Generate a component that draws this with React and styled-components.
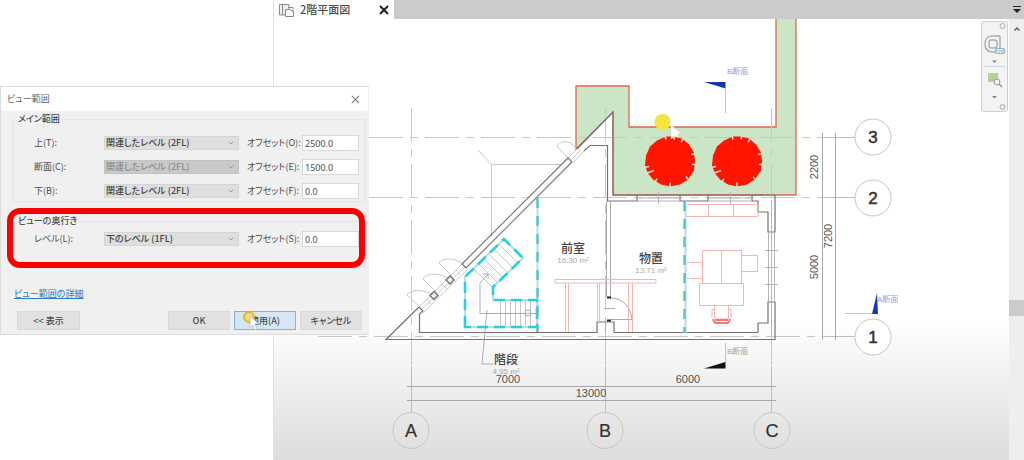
import React from "react";
import styled, { createGlobalStyle } from "styled-components";

const GlobalStyle = createGlobalStyle`
  * { box-sizing: border-box; }
  body {
    margin: 0;
    background: #fff;
    color: #4c4c4c;
    font-family: "Liberation Sans", "Noto Sans CJK JP", sans-serif;
  }
  button, select, input { font: inherit; color: inherit; margin: 0; }
`;

const Workspace = styled.main`
  position: relative;
  display: grid;
  grid-template-columns: 273px 1fr;
  min-height: 100vh;
  overflow: hidden;
`;

const Editor = styled.section`
  grid-column: 2;
  display: flex;
  flex-direction: column;
  min-width: 0;
`;

const TabBar = styled.header`
  display: flex;
  justify-content: space-between;
  height: 19px;
  background: #cbcbcb;
`;

const Tab = styled.div`
  display: flex;
  align-items: center;
  gap: 6px;
  width: 121px;
  padding: 0 4px 0 5px;
  background: #fff;
  border-left: 1px solid #ddd;
  font-size: 11px;
  font-weight: 500;
  font-family: "Noto Sans CJK JP", sans-serif;
  line-height: 19px;
`;

const TabTitle = styled.span`
  flex: 1;
`;

const IconButton = styled.button`
  display: flex;
  align-items: center;
  justify-content: center;
  width: ${(p) => p.$width || 12}px;
  height: ${(p) => p.$height || 16}px;
  padding: 0;
  border: 0;
  background: transparent;
`;

const EditorBody = styled.div`
  display: flex;
  flex: 1;
`;

const Canvas = styled.div`
  position: relative;
  flex: 1;
  min-width: 0;
  border-left: 1px solid #e0e0e0;
  background: linear-gradient(#fff 68%, #f8f8f8 75%, #dddddd 100%);
`;

const Plan = styled.svg`
  display: block;
  width: 100%;
  height: auto;
`;

const ScrollTrack = styled.div`
  display: flex;
  flex-direction: column;
  width: 15px;
  background: #eeeeee;
`;

const ScrollSpace = styled.div`
  flex: ${(p) => p.$grow};
`;

const ScrollThumb = styled.div`
  height: 16px;
  background: #cbcbcb;
`;

const NavPalette = styled.nav`
  position: absolute;
  top: 2px;
  right: 1px;
  display: flex;
  flex-direction: column;
  align-items: center;
  width: 27px;
  height: 91px;
  border: 1px solid #cfcfcf;
  border-radius: 3px;
  background: #f3f3f3;
`;

const Dialog = styled.form`
  position: absolute;
  top: 86px;
  left: 0;
  width: 369px;
  background: #f0f0f0;
  border: 1px solid #dcdcdc;
  border-right-color: #f0f0f0;
  font-family: "Noto Sans CJK JP", sans-serif;
  font-feature-settings: "palt";
  font-size: 9px;
  line-height: 16px;
`;

const TitleBar = styled.div`
  display: flex;
  align-items: center;
  justify-content: space-between;
  height: 24px;
  padding: 0 7px 0 6px;
  background: #fff;
  color: #666;
`;

const DialogBody = styled.div`
  padding: 0 2px 4px 12px;
`;

const Group = styled.fieldset`
  position: relative;
  display: flex;
  flex-direction: column;
  gap: 8px;
  margin: 0;
  padding: ${(p) => p.$top}px 6px ${(p) => p.$bottom}px 20px;
  border: 1px solid #e6e6e6;
`;

const Legend = styled.legend`
  margin-left: -18px;
  padding: 0 2px;
  height: 16px;
  font-weight: 500;
`;

const Row = styled.div`
  display: grid;
  grid-template-columns: 70px 135px 1fr 57px;
  align-items: center;
  height: 16px;
`;

const FieldLabel = styled.label`
  padding-left: ${(p) => (p.$offset ? 8 : 0)}px;
  white-space: nowrap;
`;

const SelectBox = styled.div`
  display: grid;
  align-items: center;
  background: ${(p) => (p.$muted ? "#c9c9c9" : "#dedede")};
  color: ${(p) => (p.$muted ? "#8c8c8c" : "#444")};
  border: 1px solid ${(p) => (p.$muted ? "#c2c2c2" : "#d6d6d6")};
  height: 14px;
  svg { grid-area: 1 / 1; justify-self: end; margin-right: 3px; pointer-events: none; }
`;

const Select = styled.select`
  grid-area: 1 / 1;
  appearance: none;
  width: 100%;
  height: 12px;
  padding: 0 12px 0 1px;
  border: 0;
  background: transparent;
  line-height: 12px;
  font-weight: 500;
  font-feature-settings: "palt";
  opacity: 1;
  &:disabled { color: inherit; opacity: 1; }
`;

const TextInput = styled.input`
  width: 100%;
  height: 16px;
  padding: 0 2px;
  border: 1px solid #d8d8d8;
  background: #fff;
  font-family: "Noto Sans", "Noto Sans CJK JP", sans-serif;
  font-size: 9px;
  line-height: 14px;
`;

const Highlight = styled.div`
  position: absolute;
  inset: -21px 0 -1px -7px;
  border: 6px solid #fb0000;
  border-radius: 13px;
  pointer-events: none;
`;

const Separator = styled.div`
  height: ${(p) => p.$size}px;
`;

const HelpLink = styled.a`
  display: inline-block;
  margin-left: 1px;
  color: #2c7bc9;
`;

const Footer = styled.div`
  display: flex;
  gap: 4px;
  margin-top: 9px;
  padding: 0 4px;
`;

const Button = styled.button`
  position: relative;
  width: ${(p) => p.$width || 62}px;
  height: 19px;
  padding: 0;
  border: 1px solid ${(p) => (p.$active ? "#7fb2dd" : "#dadada")};
  background: ${(p) => (p.$active ? "#d5e7f5" : "#e1e1e1")};
  margin-right: ${(p) => (p.$push ? "auto" : "0")};
  font-weight: 500;
  line-height: 16px;
  font-feature-settings: "palt";
`;

const Pointer = styled.svg`
  position: absolute;
  top: -3px;
  left: 7px;
  pointer-events: none;
`;

const Chevron = () => (
  <svg width="8" height="6" viewBox="0 0 8 6" fill="none" stroke="#9a9a9a">
    <path d="M1.5 1.5 4 4 6.5 1.5" />
  </svg>
);

const Cross = ({ size, color, width }) => (
  <svg width={size} height={size} viewBox="0 0 10 10" stroke={color} strokeWidth={width}>
    <path d="M1 1 9 9M9 1 1 9" />
  </svg>
);

function RangeRow({ id, label, level, offsetLabel, offset, disabled }) {
  return (
    <Row>
      <FieldLabel htmlFor={`${id}-level`}>{label}</FieldLabel>
      <SelectBox $muted={disabled}>
        <Select id={`${id}-level`} disabled={disabled} defaultValue={level}>
          <option>{level}</option>
        </Select>
        <Chevron />
      </SelectBox>
      <FieldLabel $offset htmlFor={`${id}-offset`}>{offsetLabel}</FieldLabel>
      <TextInput id={`${id}-offset`} defaultValue={offset} />
    </Row>
  );
}

function ViewRangeDialog() {
  return (
    <Dialog aria-label="ビュー範囲" onSubmit={(e) => e.preventDefault()}>
      <TitleBar>
        <span>ビュー範囲</span>
        <IconButton type="button" aria-label="閉じる">
          <Cross size={9} color="#777" width="1.2" />
        </IconButton>
      </TitleBar>
      <DialogBody>
        <Group $top={8} $bottom={2}>
          <Legend>メイン範囲</Legend>
          <RangeRow id="top" label="上(T):" level="関連したレベル (2FL)" offsetLabel="オフセット(O):" offset="2500.0" />
          <RangeRow id="cut" label="断面(C):" level="関連したレベル (2FL)" offsetLabel="オフセット(E):" offset="1500.0" disabled />
          <RangeRow id="bottom" label="下(B):" level="関連したレベル (2FL)" offsetLabel="オフセット(F):" offset="0.0" />
        </Group>
        <Separator $size={11} />
        <Group $top={2} $bottom={20}>
          <Legend>ビューの奥行き</Legend>
          <RangeRow id="depth" label="レベル(L):" level="下のレベル (1FL)" offsetLabel="オフセット(S):" offset="0.0" />
          <Highlight />
        </Group>
        <Separator $size={18} />
        <HelpLink href="#details">ビュー範囲の詳細</HelpLink>
        <Footer>
          <Button type="button" $width={63} $push>&lt;&lt; 表示</Button>
          <Button type="submit">OK</Button>
          <Button type="button" $active>
            適用(A)
            <Pointer width="20" height="22" viewBox="0 0 20 22">
              <circle cx="7" cy="8" r="5" fill="#f4dc7a" stroke="#dfb52c" strokeWidth="2" />
              <path d="M8 7v12l3-3 2 5 2-1-2-5h4z" fill="#fff" stroke="#aaa" strokeWidth=".6" />
            </Pointer>
          </Button>
          <Button type="button">キャンセル</Button>
        </Footer>
      </DialogBody>
    </Dialog>
  );
}

const Bubble = ({ x, y, children, bold }) => (
  <g>
    <circle cx={x} cy={y} r="18" fill={bold ? "#fff" : "none"} stroke="#c6c6c6" />
    <text x={x} y={y + 6} textAnchor="middle" fontSize={bold ? 17 : 18} fill="#333"
      stroke="#333" strokeWidth={bold ? ".5" : ".2"}>{children}</text>
  </g>
);

const Tree = ({ x, y }) => (
  <g transform={`translate(${x} ${y})`}>
    <path fill="#ff1500" d="M-4-25 4-25 12-23 19-17 24-9 25 0 24 9 18 18 10 23 0 25-9 23-17 18-22 12-25 4-24-6-20-15-13-21Z" />
    <path stroke="#f6d9c8" strokeWidth="1.6" d="M-5-26-4-22M5-26 4-22M13-23 11-19M26-8 21-7M26 3 22 3M19 19 16 15M0 26V21M-15 21-13 17M-24 12-16 9M-26 6-21 5" />
  </g>
);

const RoomLabel = ({ x, y, name, area }) => (
  <g textAnchor="middle">
    <text x={x} y={y} fontSize="12" fontWeight="500" fill="#444" fontFamily="Noto Sans CJK JP, sans-serif">{name}</text>
    <text x={x} y={y + 10} fontSize="8" fill="#a8a8a8">{area}</text>
  </g>
);

const VerticalText = ({ x, y, children }) => (
  <text transform={`translate(${x} ${y}) rotate(-90)`} textAnchor="middle">{children}</text>
);

function FloorPlan() {
  return (
    <Plan viewBox="274 19 735 441" fill="none" role="img" aria-label="2階平面図">
      <path d="M776 19V127H629V86H576V149L613 112V195H796V19" fill="#cbe5c7" stroke="#df6652" strokeWidth="1.3" />

      <g stroke="#c8c8c8" strokeDasharray="34 7 8 7">
        <path d="M369 137.500H832M369 197.500H832M318 336.500H832" />
        <path d="M411.5 108V365M605.5 108V365M771.5 108V365" />
      </g>
      <path stroke="#bdbdbd" d="M826 137.500H855M826 197.500H855M826 336.500H855M411.5 366V412M605.5 366V412M771.5 366V412" />
      <path stroke="#a8a8a8" d="M822.5 133V340M835.5 133V340M407 386.5H776M407 400.5H776" />

      <g stroke="#c9c9c9">
        <path d="M478 150 491.500 164.500M491.500 237V164.500H561" />
        <path d="M407 295 420 307M423 279 436 292M439 263 452 276M557 146 568 158" />
        <path d="M407 295C411 289 422 289 434 295M423 279C427 272 440 273 450 279M439 263C442 257 455 258 464 264M557 146C560 140 572 140 576 149" />
        <path d="M419 307 462 264M421 310 465 267M423 313 468 269M427 299 431 304M442 284 447 289M456 270 460 275M568 158 577 149M571 160 581 150M573 163 584 151" />
      </g>

      <g stroke="#7a7272" strokeWidth="1.2">
        <path d="M419 307 386 339.500H775V302H768V323H758V332.500H614V322H597V332.500H419.500V314L423 311 419 307" />
        <path d="M568 158 462 264 466 268 572 162ZM577 149 613 112V195H775V232H768V212H758V201H752V195" />
        <path d="M584 151 590 145.500H607.500V201H637V195M680 195V201H708V195" />
      </g>
      <path stroke="#777" strokeWidth="1.5" d="M434 291.500 438 295.500 434 299.500 430 295.500ZM450 276 454 280 450 284 446 280Z" />
      <path stroke="#b5b5b5" d="M637 198H680M637 201H680M708 198H752M708 201H752M658.500 192V204M730.500 192V204M768.500 232V302M774.500 232V302M771.500 200V335M765 250.500H778M765 267.500H778M765 284.500H778" />
      <path stroke="#aaa" d="M606.500 201V297M610.500 201V297M605.500 320V333M604 308.500H615M611 298C622 298 631 307 632 319.500H611" />
      <path stroke="#222" strokeWidth="2" d="M607 297.500H611M607 320.500H611" />

      <g stroke="#c6c6c6">
        <path d="M500.500 301V326M505.500 301V326M510.500 301V326M515.500 301V326M520.500 301V326M525.500 301V326M530.500 301V326" />
        <path d="M499 244 518 263M494 249 513 268M489 254 508 273M484 259 503 278M479 264 498 283M474 269 493 288" />
      </g>
      <path stroke="#999" strokeWidth=".8" d="M537 313.500H480V283L488 274M483 274H488V279M487 310 482 364H493" />
      <circle cx="528" cy="313" r="3" stroke="#aaa" />
      <path stroke="#b7dde0" strokeWidth="2" d="M537.500 198V332M685.500 201V333M465 327V277L504 239 523 258 493 287V300H537V327Z" />
      <path stroke="#28cfdc" strokeWidth="2.6" strokeDasharray="11 6" d="M465 327V277L504 239 523 258 493 287V300H537V327Z" />
      <path stroke="#55c5ca" strokeWidth="2.4" strokeDasharray="10 8" d="M537.500 198V332M684.500 201V333" />

      <g stroke="#f5b5b0">
        <path d="M555 279.500H656V283H555ZM565.500 283V332M568.500 283V332M597.500 283V322M599.500 283V322M628.500 283V332M632.500 283V332" />
        <path d="M687 204.500H758V216.500H687M708.500 204V216M733.500 204V216" />
        <path d="M702.500 250.500H741.500V283.500H702.500ZM721.500 250V283M699.500 283.500H743.500V305.500H699.500ZM687 262.500H702M687 278.500H702M742 255.500H757.500V271.500H742" />
        <path d="M714.500 305V319H728.500V305M715 309.500H712V318M728 309.500H731V318" />
      </g>
      <path stroke="#ef7b72" strokeWidth="2" d="M713 319Q714 323 716 323H727Q729 323 730 319M715 320H728" />

      <Tree x={670} y={161.5} />
      <Tree x={737} y={161.5} />
      <circle cx="662.500" cy="122" r="8" fill="#f5e43c" />
      <path d="M671 125V139L675 136 679 138 678 134 681 133Z" fill="#fffdf5" stroke="#ccc" strokeWidth=".5" />

      <path fill="#1637b4" d="M704 82H725.500V88.500Z" />
      <path fill="#1637b4" d="M877 293 872 314H878Z" />
      <path fill="#111" d="M704 368.500 725.500 362V368.500Z" />
      <path stroke="#c3c3c3" d="M725.500 88V113M725.500 343V362M845 313.500H872" />
      <g fontSize="8" fill="#86a5e0">
        <text x="727" y="74">B断面</text>
        <text x="877" y="302">A断面</text>
        <text x="727" y="354" fill="#a4a4a4">B断面</text>
      </g>

      <RoomLabel x={573} y={253} name="前室" area="16.30 m²" />
      <RoomLabel x={651} y={263} name="物置" area="13.71 m²" />
      <RoomLabel x={506} y={364} name="階段" area="4.95 m²" />

      <g fontSize="11" fill="#555" textAnchor="middle">
        <text x="508" y="383">7000</text>
        <text x="688" y="383">6000</text>
        <text x="591" y="397">13000</text>
        <VerticalText x={818} y={167}>2200</VerticalText>
        <VerticalText x={818} y={267}>5000</VerticalText>
        <VerticalText x={832} y={236}>7200</VerticalText>
      </g>

      <Bubble x={873} y={137} bold>3</Bubble>
      <Bubble x={873} y={198} bold>2</Bubble>
      <Bubble x={873} y={337} bold>1</Bubble>
      <Bubble x={411} y={430.5}>A</Bubble>
      <Bubble x={605} y={430.5}>B</Bubble>
      <Bubble x={772} y={430.5}>C</Bubble>
    </Plan>
  );
}

function NavigationPalette() {
  return (
    <NavPalette aria-label="ナビゲーション">
      <svg width="25" height="89" viewBox="0 0 25 89" fill="none">
        <circle cx="20.500" cy="4" r="2.500" stroke="#aaa" />
        <circle cx="20.500" cy="85" r="2.500" stroke="#aaa" />
        <path d="M18 14H10C5 14 3 18 3 22C3 27 6 30 11 30H14M18 14V26" stroke="#a9b0b6" strokeWidth="1.5" />
        <rect x="7" y="18" width="8" height="8" rx="2.500" stroke="#a9b0b6" strokeWidth="1.500" />
        <rect x="13" y="26" width="10" height="6" rx="2" fill="#8fb2d2" />
        <text x="14" y="31" fontSize="6" fontWeight="700" fill="#fff">2D</text>
        <path d="M10 38.500H15L12.500 41ZM10 74H15L12.500 76.500Z" fill="#888" />
        <path d="M2 44.500H23" stroke="#d5d9dd" />
        <rect x="6" y="51" width="10" height="9" fill="#b4d095" />
        <circle cx="15" cy="60" r="3" fill="#eee" stroke="#999" />
        <path d="M17 62 20 65" stroke="#999" strokeWidth="1.500" />
      </svg>
    </NavPalette>
  );
}

export default function App() {
  return (
    <>
      <GlobalStyle />
      <Workspace>
        <Editor>
          <TabBar>
            <Tab>
              <svg width="15" height="14" viewBox="0 0 15 14" fill="#eee" stroke="#8a8a8a">
                <path d="M.5 1.500H10V12H.5ZM3.500 1.500V12" />
                <path d="M6.500 6.500H11L14.500 9V13.500H6.500Z" fill="#fff" />
                <path d="M9 4.500H14V9" fill="none" />
              </svg>
              <TabTitle>2階平面図</TabTitle>
              <IconButton type="button" aria-label="タブを閉じる">
                <Cross size={10} color="#222" width="2" />
              </IconButton>
            </Tab>
            <IconButton type="button" aria-label="タブ一覧" $width={14} $height={19}>
              <svg width="8" height="7" viewBox="0 0 8 7" fill="#222">
                <path d="M0 0H8V1H0ZM0 3H8L4 7Z" />
              </svg>
            </IconButton>
          </TabBar>
          <EditorBody>
            <Canvas>
              <FloorPlan />
              <NavigationPalette />
            </Canvas>
            <ScrollTrack>
              <IconButton type="button" aria-label="上へスクロール" $width={15} $height={20}>
                <svg width="6" height="4" viewBox="0 0 6 4" fill="none" stroke="#555" strokeWidth="1.400">
                  <path d="M.5 3.500 3 1 5.500 3.500" />
                </svg>
              </IconButton>
              <ScrollSpace $grow={261} />
              <ScrollThumb />
              <ScrollSpace $grow={144} />
            </ScrollTrack>
          </EditorBody>
        </Editor>
        <ViewRangeDialog />
      </Workspace>
    </>
  );
}
